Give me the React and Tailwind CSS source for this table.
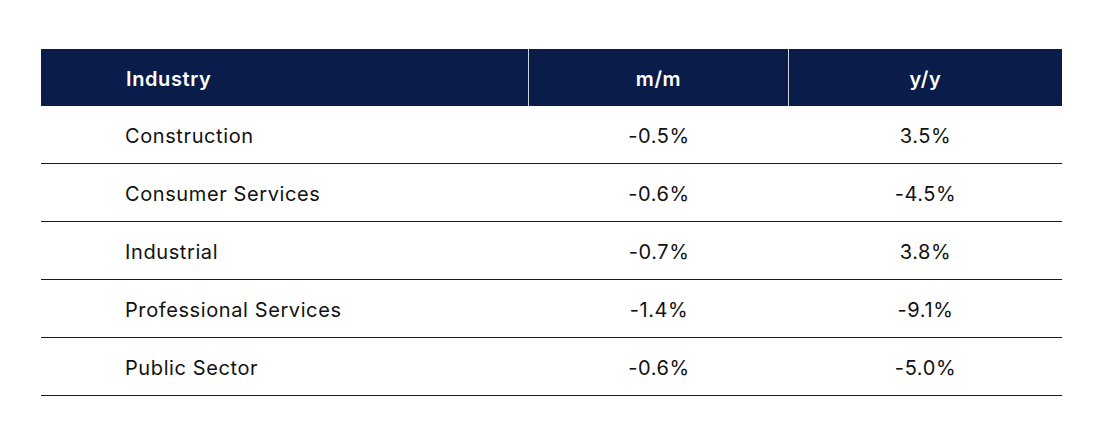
import React from 'react';

const rows = [
  ['Construction', '-0.5%', '3.5%'],
  ['Consumer Services', '-0.6%', '-4.5%'],
  ['Industrial', '-0.7%', '3.8%'],
  ['Professional Services', '-1.4%', '-9.1%'],
  ['Public Sector', '-0.6%', '-5.0%'],
];

export default function App() {
  return (
    <div className="w-[1095px] h-[421px] bg-white pt-[49px] pl-[41px]" style={{ fontFamily: 'Inter, "Liberation Sans", sans-serif' }}>
      <div className="w-[1021px]">
        {/* Header */}
        <div className="flex h-[57px] bg-[#0a1c4a] text-white font-semibold text-[20px] tracking-[0.6px]">
          <div className="w-[488px] pl-[85px] pt-[2px] flex items-center border-r border-white/80">Industry</div>
          <div className="w-[260px] pt-[2px] flex items-center justify-center border-r border-white/80">m/m</div>
          <div className="flex-1 pt-[2px] flex items-center justify-center">y/y</div>
        </div>

        {/* Rows */}
        {rows.map(([name, mm, yy]) => (
          <div key={name} className="flex h-[58px] pt-[2px] border-b border-[#1a1a1a] text-[#111] text-[20px] tracking-[0.6px]">
            <div className="w-[488px] pl-[84px] flex items-center">{name}</div>
            <div className="w-[260px] flex items-center justify-center">{mm}</div>
            <div className="flex-1 flex items-center justify-center">{yy}</div>
          </div>
        ))}
      </div>
    </div>
  );
}
